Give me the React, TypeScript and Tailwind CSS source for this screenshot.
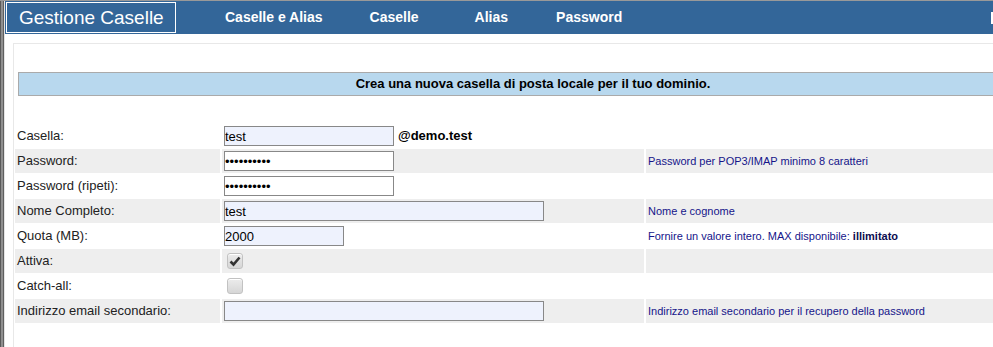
import { FunctionComponent, ReactNode } from "react";

const Row: FunctionComponent<{
  label: string;
  gray?: boolean;
  help?: ReactNode;
  children?: ReactNode;
}> = ({ label, gray, help, children }) => {
  const bg = gray ? "bg-[#eeeeee]" : "bg-white";
  return (
    <>
      <div className={`${bg} h-[24px] flex items-center pl-[2px] text-[13px] text-[#222]`}>{label}</div>
      <div className={`${bg} h-[24px] flex items-center pl-[2px]`}>{children}</div>
      <div className={`${bg} h-[24px] flex items-center pl-[2px] text-[11px] text-[#15158a]`}>{help}</div>
    </>
  );
};

const Input: FunctionComponent<{ w: string; value?: string; pass?: boolean; blue?: boolean }> = ({
  w,
  value,
  pass,
  blue,
}) => (
  <input
    readOnly
    type={pass ? "password" : "text"}
    defaultValue={value}
    className={`${w} h-[20px] border border-[#888] px-0 text-[13px] text-black outline-none ${
      blue ? "bg-[#eef2fd]" : "bg-white"
    }`}
    style={{ fontFamily: "'Liberation Sans', Arial, sans-serif" }}
  />
);

const Check: FunctionComponent<{ on?: boolean }> = ({ on }) => (
  <span className="ml-[3px] w-[16px] h-[16px] rounded-[3px] border border-[#c2c2c2] bg-gradient-to-b from-[#ececec] to-[#d6d6d6] flex items-center justify-center shadow-[inset_0_1px_0_#fff]">
    {on && (
      <svg width="12" height="12" viewBox="0 0 12 12">
        <path d="M1.5 6.5 L4.5 9.5 L10.5 2.5" fill="none" stroke="#333" strokeWidth="2.6" strokeLinejoin="miter" />
      </svg>
    )}
  </span>
);

const App = () => {
  return (
    <div
      className="w-[993px] h-[347px] overflow-hidden flex bg-white border-t border-[#999]"
      style={{ fontFamily: "'Liberation Sans', Arial, sans-serif" }}
    >
      <div className="w-[5px] shrink-0 flex">
        <div className="w-px bg-[#5a5a5a]" />
        <div className="w-[2px] bg-[#8f8f8f]" />
        <div className="w-px bg-[#5f5f5f]" />
        <div className="w-px bg-[#e4e4e4]" />
      </div>
      <div className="flex-1 min-w-0 flex flex-col">
        <div className="h-[33px] bg-[#336699] flex items-center text-white">
          <div className="ml-px h-[31px] w-[170px] border border-white flex items-center pl-[12px] text-[19px] leading-none">
            Gestione Caselle
          </div>
          <span className="ml-[49px] font-bold text-[14px]">Caselle e Alias</span>
          <span className="ml-[47px] font-bold text-[14px]">Caselle</span>
          <span className="ml-[56px] font-bold text-[14px]">Alias</span>
          <span className="ml-[48px] font-bold text-[14px]">Password</span>
          <span className="ml-auto w-[2px] h-[12px] bg-white" />
        </div>
        <div className="flex-1 pl-[8px] pt-[9px]">
          <div className="h-full border-t border-l border-[#e8e8e8] pl-px pt-[28px]">
            <div className="ml-[3px] h-[24px] bg-[#b8d8ee] border border-r-0 border-[#aaaaaa] flex items-center justify-center font-bold text-[13px] text-black">
              <span className="ml-[54px]">Crea una nuova casella di posta locale per il tuo dominio.</span>
            </div>
            <div className="mt-[28px] grid grid-cols-[205px_422px_1fr] gap-x-[2px] gap-y-px">
              <Row label="Casella:">
                <Input w="w-[170px]" value="test" blue />
                <span className="ml-[4px] font-bold text-[13px] text-black">@demo.test</span>
              </Row>
              <Row label="Password:" gray help="Password per POP3/IMAP minimo 8 caratteri">
                <Input w="w-[170px]" value="abcdefghij" pass />
              </Row>
              <Row label="Password (ripeti):">
                <Input w="w-[170px]" value="abcdefghij" pass />
              </Row>
              <Row label="Nome Completo:" gray help="Nome e cognome">
                <Input w="w-[320px]" value="test" blue />
              </Row>
              <Row
                label="Quota (MB):"
                help={
                  <span>
                    Fornire un valore intero. MAX disponibile: <b className="text-[#0c0c50]">illimitato</b>
                  </span>
                }
              >
                <Input w="w-[120px]" value="2000" blue />
              </Row>
              <Row label="Attiva:" gray>
                <Check on />
              </Row>
              <Row label="Catch-all:">
                <Check />
              </Row>
              <Row label="Indirizzo email secondario:" gray help="Indirizzo email secondario per il recupero della password">
                <Input w="w-[320px]" blue />
              </Row>
            </div>
          </div>
        </div>
      </div>
    </div>
  );
};

export default App;
